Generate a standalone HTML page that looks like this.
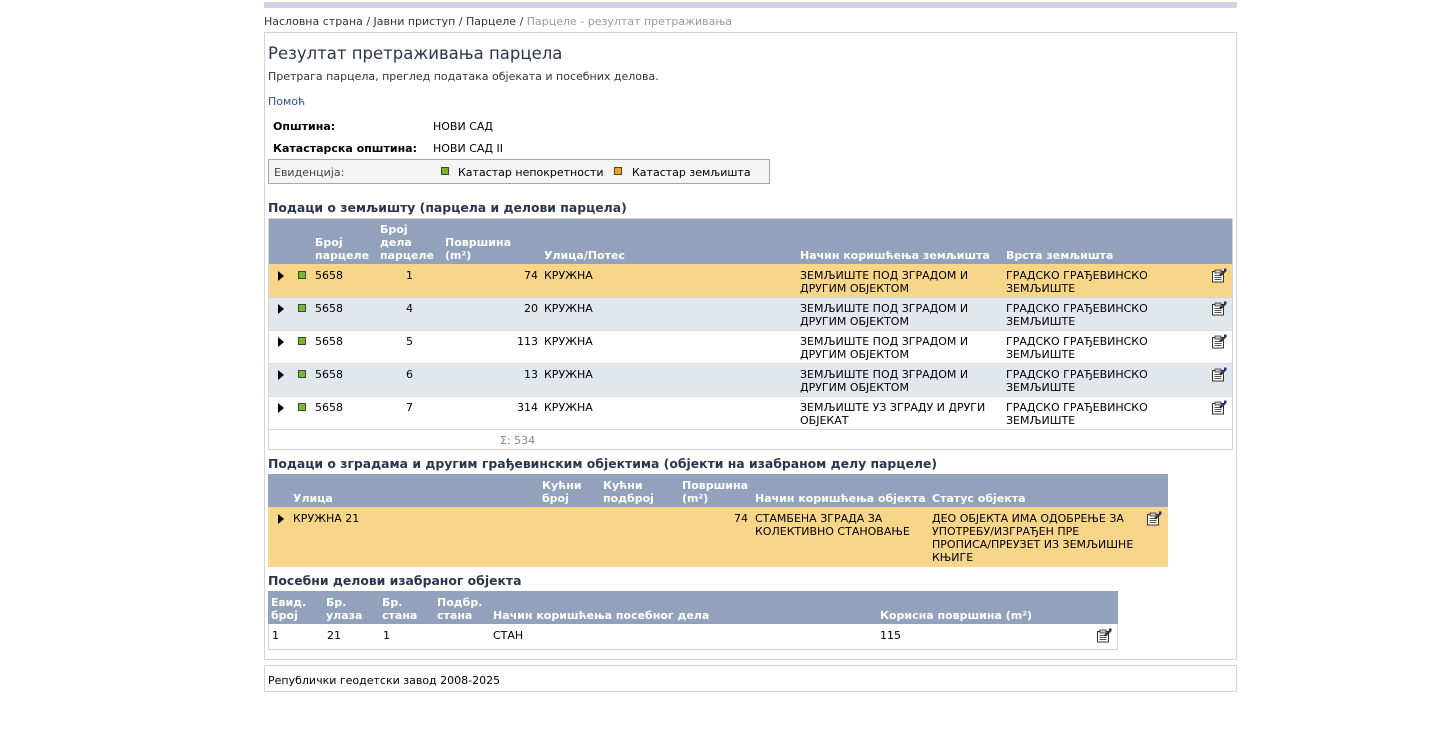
<!DOCTYPE html>
<html><head><meta charset="utf-8"><style>
*{margin:0;padding:0;box-sizing:border-box}
body{width:1443px;height:744px;background:#fff;position:relative;font:11px/13px "DejaVu Sans","Liberation Sans",sans-serif;color:#000;overflow:hidden}
.a{position:absolute;white-space:nowrap;margin-top:1px}
.b{font-weight:bold}
.h{color:#fff;font-weight:bold}
.r{text-align:right}
.box{position:absolute;border:1px solid #d4d4d4}
.bg{position:absolute}
.ar{position:absolute;width:0;height:0;border-left:6px solid #000;border-top:5px solid transparent;border-bottom:5px solid transparent}
.sq{position:absolute;width:8px;height:8px;background:#77b82e;border:1px solid #3a4a2a}
.ic{position:absolute;width:16px;height:15px}
.sec{position:absolute;font-weight:bold;font-size:12.4px;color:#2a3550;white-space:nowrap;margin-top:1px}
</style></head><body>
<div class="bg" style="left:264px;top:2px;width:973px;height:6px;background:#d6d2e4"></div>
<div class="a" style="left:264px;top:14px;color:#333">Насловна страна / Јавни приступ / Парцеле / <span style="color:#999">Парцеле - резултат претраживања</span></div>
<div class="box" style="left:264px;top:32px;width:973px;height:628px"></div>
<div class="a" style="left:268px;top:43px;font-size:16.5px;line-height:20px;color:#2a3550">Резултат претраживања парцела</div>
<div class="a" style="left:268px;top:69px;color:#333">Претрага парцела, преглед података објеката и посебних делова.</div>
<div class="a" style="left:268px;top:94px;color:#2c4f9c">Помоћ</div>
<div class="a b" style="left:273px;top:119px">Општина:</div>
<div class="a" style="left:433px;top:119px">НОВИ САД</div>
<div class="a b" style="left:273px;top:141px">Катастарска општина:</div>
<div class="a" style="left:433px;top:141px">НОВИ САД II</div>
<div class="box" style="left:268px;top:159px;width:502px;height:25px;background:#f4f4f4;border-color:#a0a8b8"></div>
<div class="a" style="left:274px;top:165px;color:#444">Евиденција:</div>
<div class="sq" style="left:441px;top:167px"></div>
<div class="a" style="left:458px;top:165px">Катастар непокретности</div>
<div class="sq" style="left:614px;top:167px;background:#f0a020"></div>
<div class="a" style="left:632px;top:165px">Катастар земљишта</div>

<div class="sec" style="left:268px;top:200px">Подаци о земљишту (парцела и делови парцела)</div>
<div class="box" style="left:268px;top:218px;width:965px;height:232px"></div>
<div class="bg" style="left:269px;top:219px;width:963px;height:45px;background:#93a2bc"></div>
<div class="a h" style="left:315px;top:235px">Број<br>парцеле</div>
<div class="a h" style="left:380px;top:222px">Број<br>дела<br>парцеле</div>
<div class="a h" style="left:445px;top:235px">Површина<br>(m²)</div>
<div class="a h" style="left:544px;top:248px">Улица/Потес</div>
<div class="a h" style="left:800px;top:248px">Начин коришћења земљишта</div>
<div class="a h" style="left:1006px;top:248px">Врста земљишта</div>

<div class="bg" style="left:269px;top:264px;width:963px;height:33px;background:#f7d68a"></div>
<div class="bg" style="left:269px;top:297px;width:963px;height:33px;background:#e2e7ee;border-top:1px solid #cfd4dc"></div>
<div class="bg" style="left:269px;top:330px;width:963px;height:33px;background:#fff;border-top:1px solid #d8dbe0"></div>
<div class="bg" style="left:269px;top:363px;width:963px;height:33px;background:#e2e7ee;border-top:1px solid #d8dbe0"></div>
<div class="bg" style="left:269px;top:396px;width:963px;height:33px;background:#fff;border-top:1px solid #d8dbe0"></div>
<div class="bg" style="left:269px;top:429px;width:963px;height:1px;background:#d8dbe0"></div>

<div class="ar" style="left:278px;top:271px"></div><div class="sq" style="left:298px;top:271px"></div>
<div class="a" style="left:315px;top:268px">5658</div><div class="a" style="left:406px;top:268px">1</div>
<div class="a r" style="left:480px;top:268px;width:58px">74</div><div class="a" style="left:544px;top:268px">КРУЖНА</div>
<div class="a" style="left:800px;top:268px">ЗЕМЉИШТЕ ПОД ЗГРАДОМ И<br>ДРУГИМ ОБЈЕКТОМ</div>
<div class="a" style="left:1006px;top:268px">ГРАДСКО ГРАЂЕВИНСКО<br>ЗЕМЉИШТЕ</div>

<div class="ar" style="left:278px;top:304px"></div><div class="sq" style="left:298px;top:304px"></div>
<div class="a" style="left:315px;top:301px">5658</div><div class="a" style="left:406px;top:301px">4</div>
<div class="a r" style="left:480px;top:301px;width:58px">20</div><div class="a" style="left:544px;top:301px">КРУЖНА</div>
<div class="a" style="left:800px;top:301px">ЗЕМЉИШТЕ ПОД ЗГРАДОМ И<br>ДРУГИМ ОБЈЕКТОМ</div>
<div class="a" style="left:1006px;top:301px">ГРАДСКО ГРАЂЕВИНСКО<br>ЗЕМЉИШТЕ</div>

<div class="ar" style="left:278px;top:337px"></div><div class="sq" style="left:298px;top:337px"></div>
<div class="a" style="left:315px;top:334px">5658</div><div class="a" style="left:406px;top:334px">5</div>
<div class="a r" style="left:480px;top:334px;width:58px">113</div><div class="a" style="left:544px;top:334px">КРУЖНА</div>
<div class="a" style="left:800px;top:334px">ЗЕМЉИШТЕ ПОД ЗГРАДОМ И<br>ДРУГИМ ОБЈЕКТОМ</div>
<div class="a" style="left:1006px;top:334px">ГРАДСКО ГРАЂЕВИНСКО<br>ЗЕМЉИШТЕ</div>

<div class="ar" style="left:278px;top:370px"></div><div class="sq" style="left:298px;top:370px"></div>
<div class="a" style="left:315px;top:367px">5658</div><div class="a" style="left:406px;top:367px">6</div>
<div class="a r" style="left:480px;top:367px;width:58px">13</div><div class="a" style="left:544px;top:367px">КРУЖНА</div>
<div class="a" style="left:800px;top:367px">ЗЕМЉИШТЕ ПОД ЗГРАДОМ И<br>ДРУГИМ ОБЈЕКТОМ</div>
<div class="a" style="left:1006px;top:367px">ГРАДСКО ГРАЂЕВИНСКО<br>ЗЕМЉИШТЕ</div>

<div class="ar" style="left:278px;top:403px"></div><div class="sq" style="left:298px;top:403px"></div>
<div class="a" style="left:315px;top:400px">5658</div><div class="a" style="left:406px;top:400px">7</div>
<div class="a r" style="left:480px;top:400px;width:58px">314</div><div class="a" style="left:544px;top:400px">КРУЖНА</div>
<div class="a" style="left:800px;top:400px">ЗЕМЉИШТЕ УЗ ЗГРАДУ И ДРУГИ<br>ОБЈЕКАТ</div>
<div class="a" style="left:1006px;top:400px">ГРАДСКО ГРАЂЕВИНСКО<br>ЗЕМЉИШТЕ</div>

<div class="a" style="left:500px;top:433px;color:#888">Σ: 534</div>

<svg class="ic" style="left:1211px;top:268px" viewBox="0 0 16 15"><use href="#doc"/></svg>
<svg class="ic" style="left:1211px;top:301px" viewBox="0 0 16 15"><use href="#doc"/></svg>
<svg class="ic" style="left:1211px;top:334px" viewBox="0 0 16 15"><use href="#doc"/></svg>
<svg class="ic" style="left:1211px;top:367px" viewBox="0 0 16 15"><use href="#doc"/></svg>
<svg class="ic" style="left:1211px;top:400px" viewBox="0 0 16 15"><use href="#doc"/></svg>

<div class="sec" style="left:268px;top:456px">Подаци о зградама и другим грађевинским објектима (објекти на изабраном делу парцеле)</div>
<div class="bg" style="left:268px;top:474px;width:900px;height:33px;background:#93a2bc"></div>
<div class="a h" style="left:293px;top:491px">Улица</div>
<div class="a h" style="left:542px;top:478px">Кућни<br>број</div>
<div class="a h" style="left:603px;top:478px">Кућни<br>подброј</div>
<div class="a h" style="left:682px;top:478px">Површина<br>(m²)</div>
<div class="a h" style="left:755px;top:491px">Начин коришћења објекта</div>
<div class="a h" style="left:932px;top:491px">Статус објекта</div>
<div class="bg" style="left:268px;top:507px;width:900px;height:60px;background:#f7d68a"></div>
<div class="ar" style="left:278px;top:514px"></div>
<div class="a" style="left:293px;top:511px">КРУЖНА 21</div>
<div class="a r" style="left:700px;top:511px;width:48px">74</div>
<div class="a" style="left:755px;top:511px">СТАМБЕНА ЗГРАДА ЗА<br>КОЛЕКТИВНО СТАНОВАЊЕ</div>
<div class="a" style="left:932px;top:511px">ДЕО ОБЈЕКТА ИМА ОДОБРЕЊЕ ЗА<br>УПОТРЕБУ/ИЗГРАЂЕН ПРЕ<br>ПРОПИСА/ПРЕУЗЕТ ИЗ ЗЕМЉИШНЕ<br>КЊИГЕ</div>
<svg class="ic" style="left:1146px;top:511px" viewBox="0 0 16 15"><use href="#doc"/></svg>

<div class="sec" style="left:268px;top:573px">Посебни делови изабраног објекта</div>
<div class="box" style="left:268px;top:591px;width:850px;height:59px"></div>
<div class="bg" style="left:268px;top:591px;width:850px;height:33px;background:#93a2bc"></div>
<div class="a h" style="left:271px;top:595px">Евид.<br>број</div>
<div class="a h" style="left:326px;top:595px">Бр.<br>улаза</div>
<div class="a h" style="left:382px;top:595px">Бр.<br>стана</div>
<div class="a h" style="left:437px;top:595px">Подбр.<br>стана</div>
<div class="a h" style="left:493px;top:608px">Начин коришћења посебног дела</div>
<div class="a h" style="left:880px;top:608px">Корисна површина (m²)</div>
<div class="a" style="left:272px;top:628px">1</div>
<div class="a" style="left:327px;top:628px">21</div>
<div class="a" style="left:383px;top:628px">1</div>
<div class="a" style="left:493px;top:628px">СТАН</div>
<div class="a" style="left:880px;top:628px">115</div>
<svg class="ic" style="left:1096px;top:628px" viewBox="0 0 16 15"><use href="#doc"/></svg>

<div class="box" style="left:264px;top:665px;width:973px;height:27px"></div>
<div class="a" style="left:268px;top:673px">Републички геодетски завод 2008-2025</div>

<svg width="0" height="0" style="position:absolute">
<defs><g id="doc">
<rect x="1.5" y="3.5" width="11" height="10.5" fill="#fff" stroke="#333"/>
<rect x="4" y="2" width="6" height="3" fill="#ccc" stroke="#333" stroke-width="0.8"/>
<path d="M3.5 7.5h7M3.5 9.5h7M3.5 11.5h7" stroke="#555" stroke-width="1"/>
<path d="M8 7 L13 2.5 L15 2 L14.5 4 L10 8.5 Z" fill="#333"/>
<rect x="13" y="0.5" width="2.5" height="3" fill="#1b2d8a"/>
</g></defs></svg>
</body></html>
